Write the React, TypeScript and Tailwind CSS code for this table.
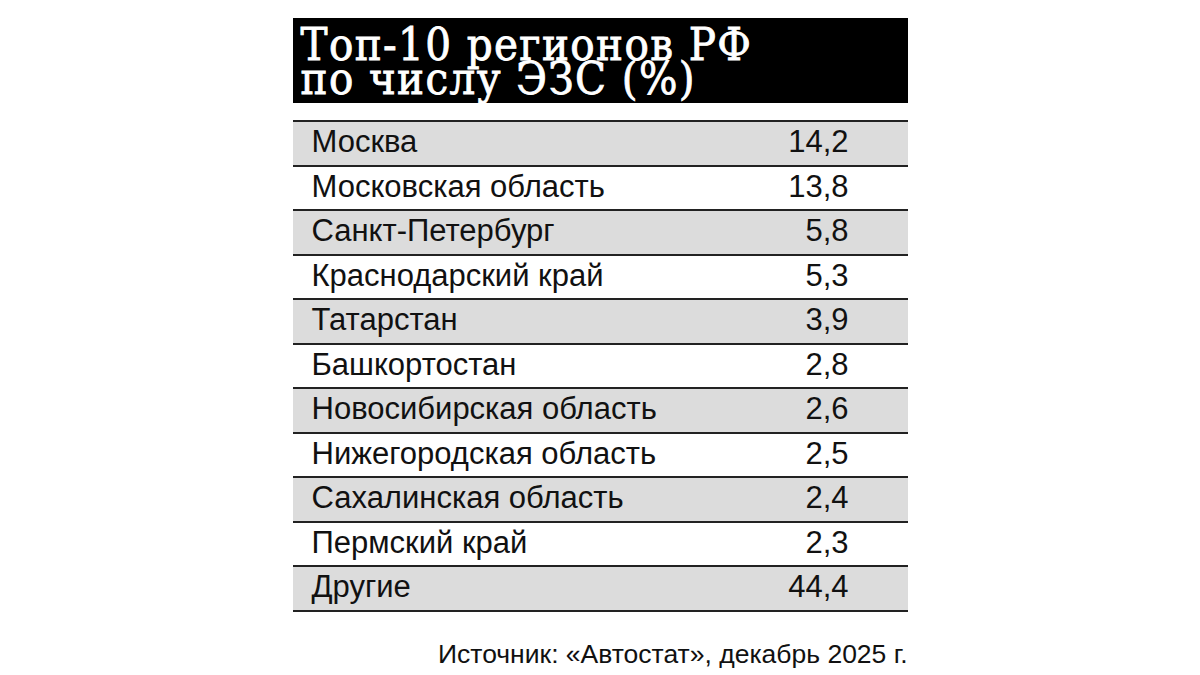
const rows: [string, string][] = [
  ["Москва", "14,2"],
  ["Московская область", "13,8"],
  ["Санкт-Петербург", "5,8"],
  ["Краснодарский край", "5,3"],
  ["Татарстан", "3,9"],
  ["Башкортостан", "2,8"],
  ["Новосибирская область", "2,6"],
  ["Нижегородская область", "2,5"],
  ["Сахалинская область", "2,4"],
  ["Пермский край", "2,3"],
  ["Другие", "44,4"],
]

export default function App() {
  return (
    <div className="flex h-[675px] w-[1200px] justify-center bg-white pt-[18px]">
      <div className="flex w-[615px] flex-col">
        {/* Title block */}
        <div className="h-[85px] bg-black pl-[8px] pt-[10px] font-['DejaVu_Serif_Condensed','DejaVu_Serif',serif] text-[45px] leading-[34px] tracking-[1.4px] text-white [-webkit-text-stroke:0.8px_white] [font-stretch:condensed]">
          <div>Топ-10 регионов РФ</div>
          <div>по числу ЭЗС (%)</div>
        </div>

        {/* Table */}
        <div className="mt-[17px] border-t-2 border-[#222] font-['Liberation_Sans',sans-serif] text-[31px] text-[#111]">
          {rows.map(([name, value], index) => (
            <div
              key={name}
              className={
                "flex h-[44.5px] items-center justify-between border-b-2 border-[#222] pb-[2px] pl-[19px] pr-[59px] " +
                (index % 2 === 0 ? "bg-[#dcdcdc]" : "bg-white")
              }
            >
              <span>{name}</span>
              <span>{value}</span>
            </div>
          ))}
        </div>

        <div className="mt-[24px] text-right font-['Liberation_Sans',sans-serif] text-[26.5px] leading-[36px] text-[#111]">
          Источник: «Автостат», декабрь 2025 г.
        </div>
      </div>
    </div>
  )
}
